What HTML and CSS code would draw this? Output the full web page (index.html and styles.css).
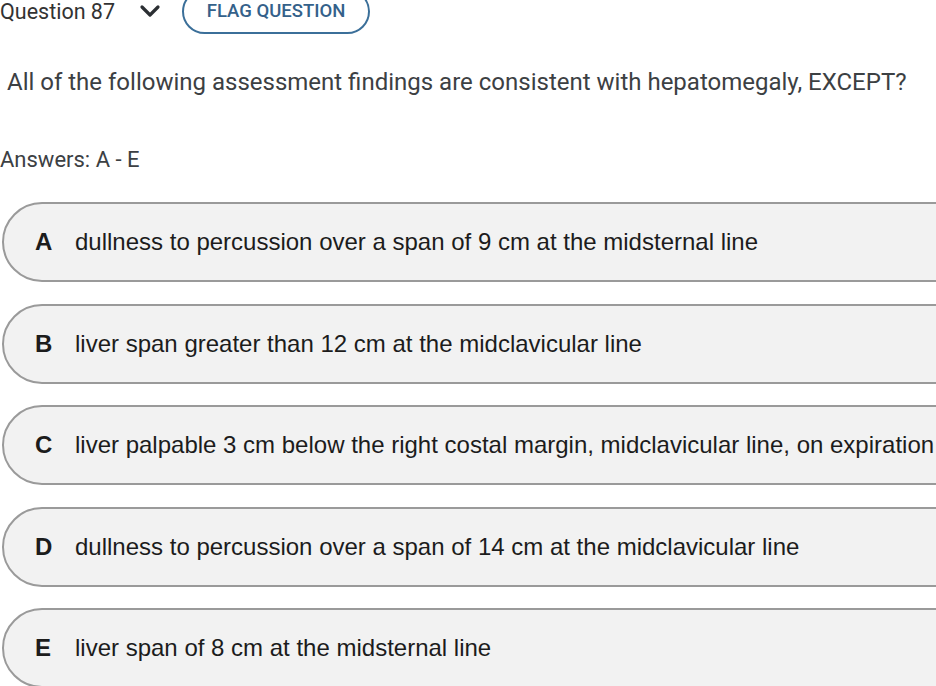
FILE: index.html
```html
<!DOCTYPE html>
<html lang="en">
<head>
    <meta charset="UTF-8">
    <meta name="viewport" content="width=device-width, initial-scale=1.0">
    <title>Question 87</title>
    <link rel="stylesheet" href="styles.css">
</head>
<body>
    <div class="page">
        <div class="top-bar">
            <span class="q-number">Question 87</span>
            <svg class="chevron" width="22" height="14" viewBox="0 0 22 14">
                <path d="M3 3 L11 11 L19 3" fill="none" stroke="#2b2f33" stroke-width="3.2" stroke-linecap="round" stroke-linejoin="round"/>
            </svg>
            <button class="flag-btn">FLAG QUESTION</button>
        </div>

        <p class="question">All of the following assessment findings are consistent with hepatomegaly, EXCEPT?</p>

        <p class="answers-label">Answers: A - E</p>

        <div class="choices">
            <div class="choice"><span class="letter">A</span><span class="choice-text">dullness to percussion over a span of 9 cm at the midsternal line</span></div>
            <div class="choice"><span class="letter">B</span><span class="choice-text">liver span greater than 12 cm at the midclavicular line</span></div>
            <div class="choice"><span class="letter">C</span><span class="choice-text">liver palpable 3 cm below the right costal margin, midclavicular line, on expiration</span></div>
            <div class="choice"><span class="letter">D</span><span class="choice-text">dullness to percussion over a span of 14 cm at the midclavicular line</span></div>
            <div class="choice"><span class="letter">E</span><span class="choice-text">liver span of 8 cm at the midsternal line</span></div>
        </div>
    </div>
</body>
</html>
```

FILE: styles.css
```css
html, body {
    margin: 0;
    padding: 0;
    background-color: #fff;
    overflow: hidden;
}
.page {
    width: 936px;
    height: 686px;
    overflow: hidden;
    font-family: Roboto, "Liberation Sans", sans-serif;
    color: #3c4043;
}
.top-bar {
    display: flex;
    align-items: center;
    height: 44px;
    margin-top: -11px;
}
.q-number {
    font-size: 21.5px;
    color: #333;
}
.chevron {
    margin-left: 24px;
}
.flag-btn {
    margin-left: 21px;
    height: 45px;
    width: 188px;
    border: 2px solid #3b6f99;
    border-radius: 23px;
    background: #fff;
    color: #34618a;
    font-family: Roboto, sans-serif;
    font-weight: 500;
    font-size: 18.5px;
    padding: 0;
}
.question {
    margin: 34px 0 0 7px;
    font-size: 24px;
    line-height: 30px;
}
.answers-label {
    margin: 50px 0 0 0;
    font-size: 22px;
    line-height: 26px;
}
.choices {
    display: flex;
    flex-direction: column;
    gap: 21.5px;
    margin-top: 29px;
    margin-left: 2px;
}
.choice {
    display: flex;
    align-items: center;
    width: 1000px;
    height: 76px;
    border: 2px solid #9a9a9a;
    border-radius: 40px;
    background-color: #f2f2f2;
    font-family: "Liberation Sans", Arial, sans-serif;
    font-size: 24px;
    color: #1c1c1c;
    flex-shrink: 0;
}
.letter {
    font-weight: bold;
    margin-left: 31px;
    width: 40px;
}
```
